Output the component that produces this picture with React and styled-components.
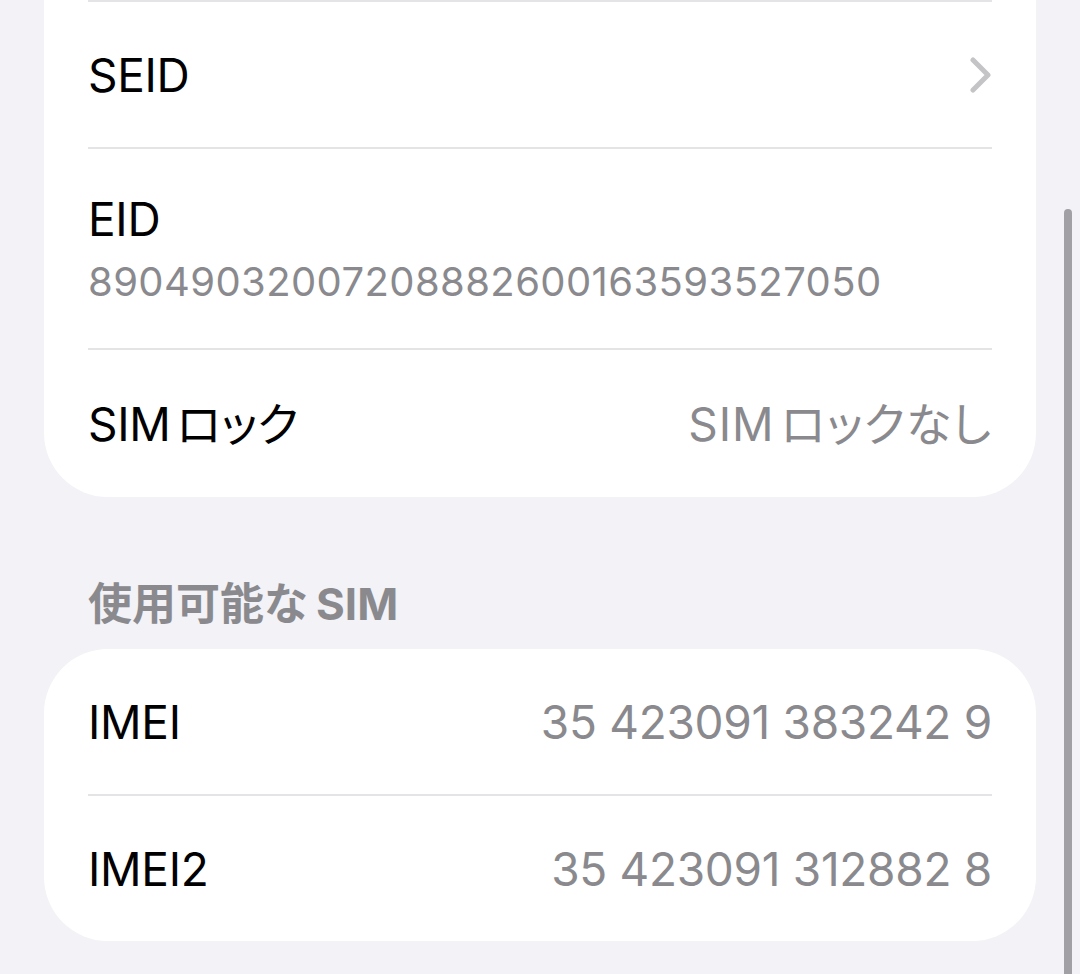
import React from "react";
import styled, { createGlobalStyle } from "styled-components";

const Global = createGlobalStyle`
  html, body { margin: 0; padding: 0; background: #f2f2f7; }
  body { font-family: "Inter", "Noto Sans CJK JP", sans-serif; -webkit-font-smoothing: antialiased; }
`;

const Page = styled.div`
  position: relative;
  height: 974px;
  overflow: hidden;
  background: #f2f2f7;
  padding: 0 44px;
  box-sizing: border-box;
`;

const Card = styled.div`
  background: #ffffff;
  border-radius: ${(p) => (p.$cut ? "0 0 64px 64px" : "64px")};
  padding: 0 44px;
`;

const Row = styled.div`
  display: flex;
  align-items: center;
  justify-content: space-between;
  min-height: ${(p) => p.$h || 145}px;
  border-top: ${(p) => (p.$divider ? "2px solid #e4e4e7" : "none")};
`;

const Stack = styled.div`
  display: flex;
  flex-direction: column;
  gap: 10px;
`;

const Label = styled.span`
  font-size: 46px;
  line-height: 56px;
  color: #000;
  letter-spacing: -0.3px;
  font-feature-settings: "palt";
`;

const Value = styled.span`
  font-size: 46px;
  line-height: 56px;
  color: #8a8a8e;
  letter-spacing: ${(p) => (p.$kana ? "1px" : "-0.3px")};
  font-feature-settings: "palt";
`;

const Sub = styled.span`
  font-size: 40px;
  line-height: 50px;
  color: #8a8a8e;
  letter-spacing: 0.4px;
`;

const Header = styled.div`
  margin: 79px 0 17px;
  padding-left: 44px;
  font-size: 44px;
  line-height: 56px;
  font-weight: 700;
  color: #8a8a8e;
`;

const Gap = styled.span`
  display: inline-block;
  width: ${(p) => p.$w || 6}px;
`;

const Scrollbar = styled.div`
  position: absolute;
  right: 8px;
  top: 209px;
  bottom: 0;
  width: 8px;
  border-radius: 4px 4px 0 0;
  background: #a1a1a5;
`;

const Chevron = () => (
  <svg width="22" height="36" viewBox="0 0 22 36" fill="none">
    <path d="M3 3 L18 18 L3 33" stroke="#c4c4c7" strokeWidth="5" strokeLinecap="round" strokeLinejoin="round" />
  </svg>
);

export default function App() {
  return (
    <Page>
      <Global />
      <Card $cut>
        <Row $divider $h={145}>
          <Label>SEID</Label>
          <Chevron />
        </Row>
        <Row $divider $h={199}>
          <Stack>
            <Label>EID</Label>
            <Sub>89049032007208882600163593527050</Sub>
          </Stack>
        </Row>
        <Row $divider $h={147}>
          <Label>SIM<Gap $w={6} />ロック</Label>
          <Value $kana>SIM<Gap $w={6} />ロックなし</Value>
        </Row>
      </Card>
      <Header>使用可能な<Gap $w={8} />SIM</Header>
      <Card>
        <Row $h={145}>
          <Label>IMEI</Label>
          <Value>35 423091 383242 9</Value>
        </Row>
        <Row $divider $h={145}>
          <Label>IMEI2</Label>
          <Value>35 423091 312882 8</Value>
        </Row>
      </Card>
      <Scrollbar />
    </Page>
  );
}
